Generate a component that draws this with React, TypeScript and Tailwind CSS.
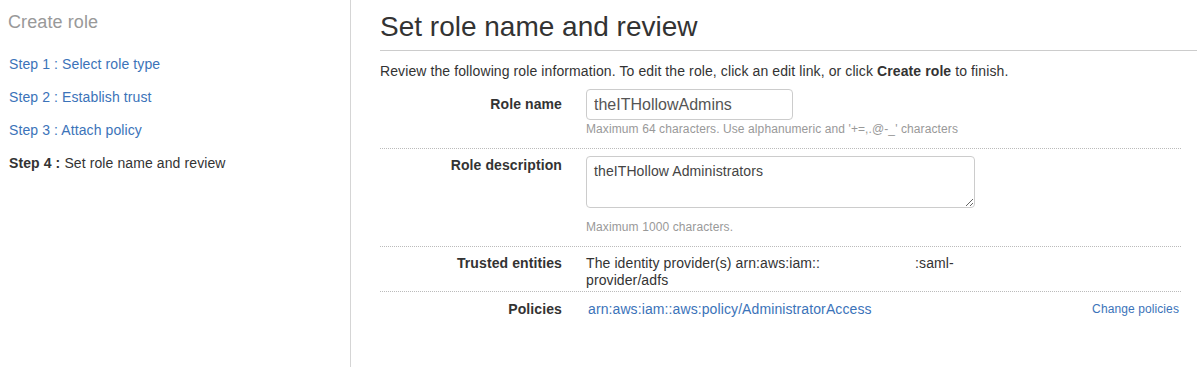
const STEPS = [
  { n: 1, label: "Select role type" },
  { n: 2, label: "Establish trust" },
  { n: 3, label: "Attach policy" },
  { n: 4, label: "Set role name and review", current: true },
];

function Row({ label, labelPad, children, last }: { label: string; labelPad: string; children: React.ReactNode; last?: boolean }) {
  return (
    <div className={`flex ${last ? "" : "border-b border-dotted border-[#bbb]"}`}>
      <div className={`w-[182px] shrink-0 text-right font-bold leading-[17px] text-[#333] ${labelPad}`}>{label}</div>
      <div className="ml-[24px] flex-1">{children}</div>
    </div>
  );
}

export default function App() {
  return (
    <div className="flex h-[367px] w-[1198px] overflow-hidden bg-white font-['Liberation_Sans',Arial,sans-serif] text-[14px] tracking-[0.1px] text-[#333]">
      {/* Wizard steps */}
      <aside className="w-[351px] shrink-0 border-r border-[#d5d5d5]">
        <h2 className="pl-[8px] pt-[12px] text-[18px] leading-[20px] text-[#999]">Create role</h2>
        <ul className="mt-[22px] space-y-[13px] pl-[9px]">
          {STEPS.map((s) =>
            s.current ? (
              <li key={s.n} className="leading-[20px] text-[#333]">
                <span className="font-bold">Step {s.n} :</span> {s.label}
              </li>
            ) : (
              <li key={s.n} className="leading-[20px] text-[#3b73b9]">
                Step {s.n} : {s.label}
              </li>
            )
          )}
        </ul>
      </aside>

      <main className="flex-1 pl-[29px] pr-[1px]">
        <h1 className="mt-[11px] border-b border-[#ccc] pb-[7px] text-[28px] leading-[32px] tracking-normal text-[#333]">Set role name and review</h1>
        <p className="mt-[10px] leading-[20px]">
          Review the following role information. To edit the role, click an edit link, or click <b>Create role</b> to finish.
        </p>

        <div className="mr-[16px] mt-[8px]">
          <Row label="Role name" labelPad="pt-[7px]">
            <input
              readOnly
              value="theITHollowAdmins"
              className="h-[31px] w-[207px] rounded-[4px] border border-[#ccc] bg-white px-[7px] text-[16px] tracking-normal text-[#555] outline-none"
            />
            <p className="mt-[1px] pb-[11px] text-[12px] leading-[16px] text-[#999]">
              Maximum 64 characters. Use alphanumeric and '+=,.@-_' characters
            </p>
          </Row>

          <Row label="Role description" labelPad="pt-[8px]">
            <div className="pt-[7px]">
              <textarea
                readOnly
                defaultValue="theITHollow Administrators"
                className="block h-[52px] w-[389px] rounded-[4px] border border-[#ccc] bg-white px-[7px] py-[6px] text-[14px] leading-[17px] text-[#444] outline-none"
              />
              <p className="mt-[11px] pb-[11px] text-[12px] leading-[16px] text-[#999]">Maximum 1000 characters.</p>
            </div>
          </Row>

          <Row label="Trusted entities" labelPad="pt-[8px]">
            <p className="w-[390px] pb-[2px] pt-[8px] leading-[17px] text-[#333]">
              The identity provider(s) arn:aws:iam::<span className="inline-block w-[95px]" />:saml-provider/adfs
            </p>
          </Row>

          <Row label="Policies" labelPad="pt-[9px]" last>
            <div className="flex items-center justify-between pt-[9px]">
              <a className="pl-[2px] leading-[17px] text-[#3b73b9]">arn:aws:iam::aws:policy/AdministratorAccess</a>
              <a className="pr-[2px] text-[12px] leading-[17px] text-[#3b73b9]">Change policies</a>
            </div>
          </Row>
        </div>
      </main>
    </div>
  );
}
